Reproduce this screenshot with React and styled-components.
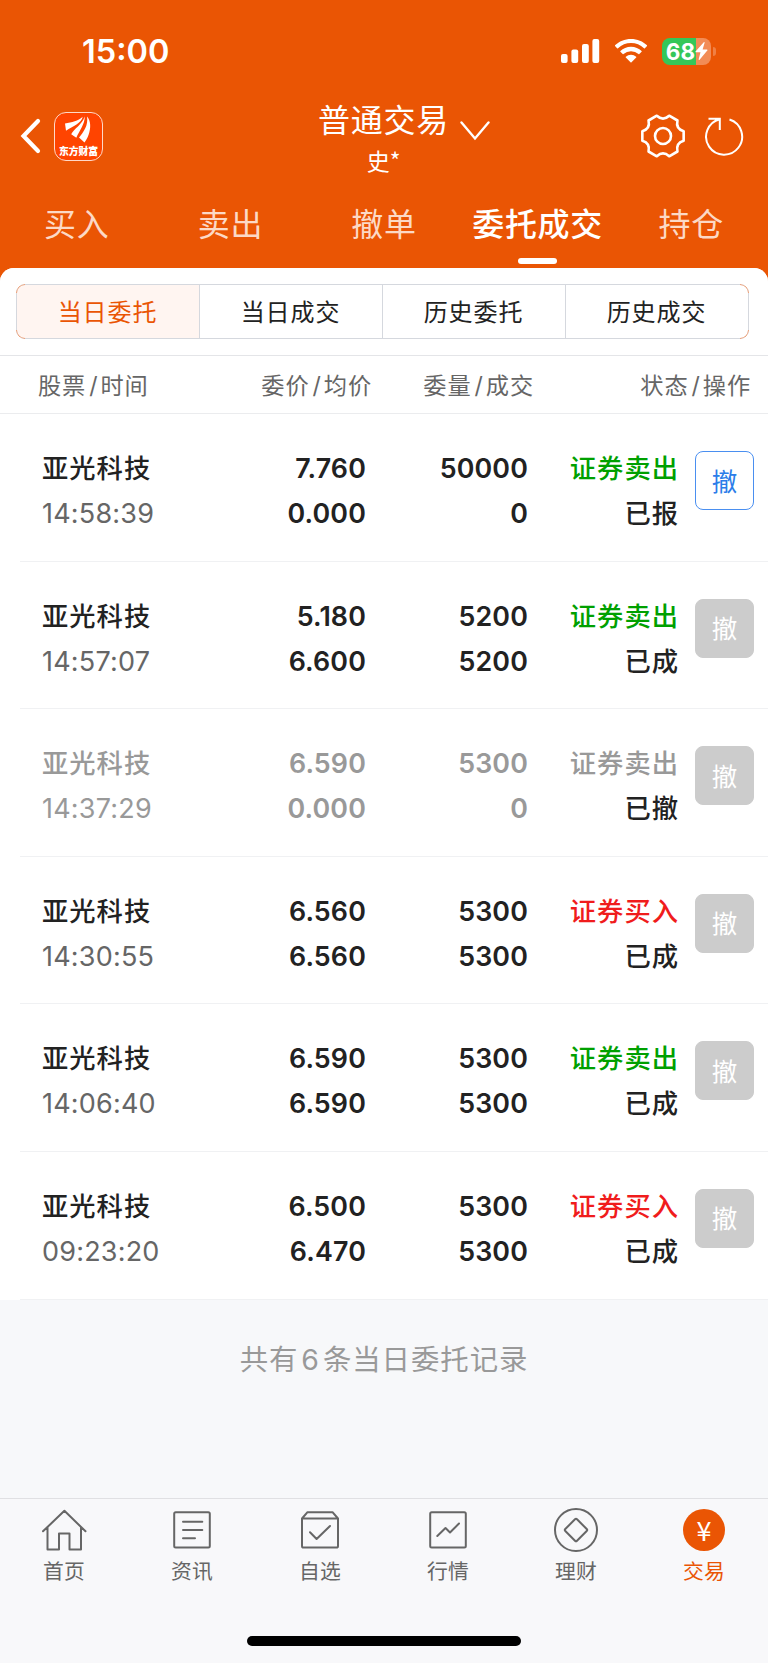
import React from "react";
import styled, { createGlobalStyle } from "styled-components";

const GlobalStyle = createGlobalStyle`
* {
  box-sizing: border-box;
}

body {
  margin: 0;
  background: #f7f8fa;
  font-family: Inter, "Noto Sans CJK SC", sans-serif;
  color: #222;
}
`

const Page = styled.div`
display: flex;
flex-direction: column;
width: 768px;
height: 1663px;
overflow: hidden;
background: #ea5504;
`

const StatusBar = styled.div`
display: flex;
align-items: center;
height: 102px;
padding: 0 52px 0 82px;
color: #fff;
`

const Clock = styled.span`
flex: 1;
padding-top: 2px;
font-size: 32.5px;
font-weight: 600;
line-height: 40px;
`

const StatusIcons = styled.div`
display: flex;
align-items: center;
gap: 15px;
`

const BatteryWrap = styled.div`
display: flex;
align-items: center;
gap: 2px;
`

const Battery = styled.div`
display: flex;
align-items: center;
justify-content: center;
width: 49px;
height: 27px;
padding-left: 1px;
border-radius: 8px;
background: linear-gradient(90deg, #34c759 0 34px, #f28c56 34px);
font-size: 22.5px;
font-weight: 700;
line-height: 27px;
`

const BatteryTip = styled.div`
width: 3px;
height: 9px;
border-radius: 0 4px 4px 0;
background: #f08044;
`

const TitleBar = styled.div`
display: grid;
grid-template-columns: 1fr auto 1fr;
grid-template-rows: 68px;
align-items: center;
height: 68px;
padding: 0 23px 0 20px;
color: #fff;
`

const TitleLeft = styled.div`
display: flex;
align-items: center;
gap: 12px;
`

const Logo = styled.div`
display: flex;
flex-direction: column;
align-items: center;
width: 49px;
height: 49px;
border: 1px solid #ffd9c8;
border-radius: 12px;
background: #ff4400;
`

const LogoText = styled.span`
font-size: 9.8px;
font-weight: 900;
line-height: 13px;
white-space: nowrap;
`

const Account = styled.div`
display: flex;
flex-direction: column;
align-items: center;
padding-top: 5px;
`

const AccountName = styled.div`
display: flex;
align-items: center;
gap: 11px;
padding-left: 43px;
font-size: 32px;
letter-spacing: 0.7px;
line-height: 43px;

svg {
  margin-top: 20px;
}
`

const AccountUser = styled.div`
padding-left: 2px;
font-family: "Noto Sans CJK SC", sans-serif;
font-size: 23px;
line-height: 36px;
`

const TitleRight = styled.div`
display: flex;
align-items: center;
justify-content: flex-end;
gap: 20px;
`

const Tabs = styled.div`
display: grid;
grid-template-columns: repeat(5, 1fr);
height: 98px;
`

const Tab = styled.div`
display: flex;
flex-direction: column;
align-items: center;
padding-top: 32px;
font-size: 32px;
letter-spacing: 0.7px;
line-height: 46px;
font-weight: ${props => props.$active ? 500 : 400};
color: ${props => props.$active ? "#fff" : "#fcd9c6"};
`

const TabLine = styled.div`
width: 39px;
height: 6px;
margin-top: 10px;
border-radius: 3px;
background: #fff;
`

const Sheet = styled.div`
flex: 1;
display: flex;
flex-direction: column;
border-radius: 14px 14px 0 0;
background: #f7f8fa;
overflow: hidden;
`

const SegmentArea = styled.div`
height: 88px;
padding: 16px 19px 0 16px;
background: #fff;
border-bottom: 1px solid #e4e5e8;
`

const Segments = styled.div`
position: relative;
display: grid;
grid-template-columns: 182px 183px 183px 1fr;
height: 55px;
border: 1px solid #d5d8de;
border-radius: 9px;

/* orange outline that shows only on the four rounded corners */
&::after {
  content: "";
  position: absolute;
  inset: -1px;
  border: 1px solid #f09a6c;
  border-radius: 9px;
  mask:
    linear-gradient(#000 0 0) 0 0 / 9px 9px no-repeat,
    linear-gradient(#000 0 0) 100% 0 / 9px 9px no-repeat,
    linear-gradient(#000 0 0) 0 100% / 9px 9px no-repeat,
    linear-gradient(#000 0 0) 100% 100% / 9px 9px no-repeat;
}
`

const Segment = styled.div`
display: flex;
align-items: center;
justify-content: center;
padding: 0 1px 3px 0;
font-size: 24px;
letter-spacing: 0.9px;
color: ${props => props.$active ? "#ea5504" : "#222"};
background: ${props => props.$active ? "#fff5f1" : "#fff"};

&:first-child {
  border-radius: 8px 0 0 8px;
}

&:last-child {
  border-radius: 0 8px 8px 0;
}

& + & {
  border-left: 1px solid #d5d8de;
}
`

const TableHead = styled.div`
display: grid;
grid-template-columns: 171px 163px 162px 217px;
align-items: center;
height: 58px;
padding: 0 0 2px 38px;
border-bottom: 1px solid #ebecee;
background: #fff;
font-size: 23.2px;
letter-spacing: 0.9px;
color: #666;
`

const HeadCell = styled.span`
text-align: ${props => props.$align || "right"};

i {
  font-style: normal;
  padding: 0 2px 0 3px;
}
`

const List = styled.div`
background: #fff;
`

const Row = styled.div`
display: grid;
grid-template-columns: 164px 160px 162px 150px 76px;
height: 147.6px;
margin-left: 20px;
padding: 32px 0 0 22px;
border-bottom: 1px solid #f0f1f3;
`

const Cell = styled.div`
display: flex;
flex-direction: column;
align-items: ${props => props.$align || "flex-end"};
font-size: 26.8px;
font-weight: 600;
letter-spacing: 0.15px;
line-height: 45px;
color: ${props => props.$muted ? "#999" : "#222"};
`

const Chinese = styled.span`
font-size: 26.3px;
letter-spacing: 1px;
font-weight: 500;
margin-right: -1px;
color: ${props => props.$color || "inherit"};
`

const Time = styled.span`
font-size: 27px;
font-weight: 400;
letter-spacing: 0.2px;
color: ${props => props.$muted ? "#999" : "#666"};
`

const CancelButton = styled.button`
justify-self: end;
width: 59px;
height: 59px;
margin-top: 5px;
padding: 0 0 3px;
border: 1px solid ${props => props.$enabled ? "#4a8ff0" : "#ccc"};
border-radius: 8px;
background: ${props => props.$enabled ? "#fff" : "#ccc"};
color: ${props => props.$enabled ? "#2b7de9" : "#fff"};
font-family: inherit;
font-size: 25.5px;
`

const Summary = styled.div`
flex: 1;
padding-top: 39px;
text-align: center;
font-size: 28.4px;
line-height: 42px;
letter-spacing: 0.95px;
color: #999;

i {
  font-style: normal;
  padding: 0 3px;
}
`

const BottomNav = styled.div`
display: grid;
grid-template-columns: repeat(6, 1fr);
height: 128px;
padding-top: 7px;
border-top: 1px solid #e0e0e3;
background: #f8f8fa;
`

const NavItem = styled.div`
display: flex;
flex-direction: column;
align-items: center;
font-size: 20.8px;
letter-spacing: 0.3px;
line-height: 35px;
color: ${props => props.$active ? "#ea5504" : "#666"};
`

const YuanIcon = styled.div`
display: flex;
align-items: center;
justify-content: center;
width: 42px;
height: 42px;
margin: 3px 0;
padding-bottom: 2px;
border-radius: 50%;
background: #ea5504;
color: #fff;
font-family: "Noto Sans CJK SC", sans-serif;
font-size: 27px;
letter-spacing: 0;
`

const HomeBarArea = styled.div`
display: flex;
justify-content: center;
height: 37px;
padding-top: 10px;
background: #f8f8fa;
`

const HomeBar = styled.div`
width: 274px;
height: 10px;
border-radius: 5px;
background: #000;
`

const NavSvg = ({ children }) => (
    <svg width="48" height="48" viewBox="0 0 48 48" fill="none" stroke="#666" strokeWidth="2" strokeLinejoin="round" strokeLinecap="round">
        {children}
    </svg>
)

const tabs = ["买入", "卖出", "撤单", "委托成交", "持仓"]
const segments = ["当日委托", "当日成交", "历史委托", "历史成交"]
const heads = [["股票", "时间"], ["委价", "均价"], ["委量", "成交"], ["状态", "操作"]]

const orders = [
    { time: "14:58:39", price: "7.760", avg: "0.000", amount: "50000", done: "0", side: "证券卖出", state: "已报" },
    { time: "14:57:07", price: "5.180", avg: "6.600", amount: "5200", done: "5200", side: "证券卖出", state: "已成" },
    { time: "14:37:29", price: "6.590", avg: "0.000", amount: "5300", done: "0", side: "证券卖出", state: "已撤" },
    { time: "14:30:55", price: "6.560", avg: "6.560", amount: "5300", done: "5300", side: "证券买入", state: "已成" },
    { time: "14:06:40", price: "6.590", avg: "6.590", amount: "5300", done: "5300", side: "证券卖出", state: "已成" },
    { time: "09:23:20", price: "6.500", avg: "6.470", amount: "5300", done: "5300", side: "证券买入", state: "已成" },
]

const navItems = [
    {
        label: "首页",
        icon: <NavSvg><path d="M3 25.300 24.400 4.800 45.500 25.300M7.500 21.300V43.500H19V27.500H29.500V43.500H41V21.300" /></NavSvg>
    },
    {
        label: "资讯",
        icon: <NavSvg><rect x="6.200" y="6.200" width="35.600" height="35.400" rx="1.500" /><path d="M15 15.700H34.300M15 24H34.300M15 32.200H27" /></NavSvg>
    },
    {
        label: "自选",
        icon: <NavSvg><path d="M6 12.500 11.500 6.200H36.500L42 12.500V40Q42 41.600 40.400 41.600H7.600Q6 41.600 6 40ZM6 12.500H42M14 26.300 20.600 33 34 20" /></NavSvg>
    },
    {
        label: "行情",
        icon: <NavSvg><rect x="6.200" y="6.200" width="35.600" height="35.400" rx="1.500" /><path d="M13.300 30 21.500 22 26 26.500 35 17.500" /></NavSvg>
    },
    {
        label: "理财",
        icon: <NavSvg><circle cx="24" cy="24" r="21" /><path d="M23 13.300Q24 12.300 25 13.300L34.700 23Q35.700 24 34.700 25L25 34.700Q24 35.700 23 34.700L13.300 25Q12.300 24 13.300 23Z" /></NavSvg>
    },
    { label: "交易", active: true, icon: <YuanIcon>¥</YuanIcon> },
]

const sideColor = order => {
    if (order.state === "已撤") return "#999"
    return order.side === "证券买入" ? "#f01c1c" : "#00a000"
}

class App extends React.Component {

    renderStatusBar() {
        return (
            <StatusBar>
                <Clock>15:00</Clock>
                <StatusIcons>
                    <svg width="39" height="24" viewBox="0 0 39 24" fill="#fff">
                        <rect x="0" y="15" width="6.600" height="9" rx="2" />
                        <rect x="10.400" y="10.400" width="6.800" height="13.600" rx="2" />
                        <rect x="21" y="5" width="6.800" height="19" rx="2" />
                        <rect x="31.400" y="0" width="6.800" height="24" rx="2" />
                    </svg>
                    <svg width="32" height="24" viewBox="0 0 32 24" fill="#fff">
                        <path d="M16 0C22.300 0 27.900 2.400 32 6.300Q32.300 6.700 32 7.100L29.900 9.200Q29.400 9.600 29 9.200A19 19 0 0 0 3 9.200Q2.600 9.600 2.100 9.200L0 7.100Q-.3 6.700 0 6.300C4.100 2.400 9.700 0 16 0Z" />
                        <path d="M16 7.800C20.200 7.800 23.900 9.400 26.600 12Q27 12.400 26.600 12.800L24.300 15.100Q23.900 15.500 23.500 15.100A11 11 0 0 0 8.500 15.100Q8.100 15.500 7.700 15.100L5.400 12.800Q5 12.400 5.400 12C8.100 9.400 11.800 7.800 16 7.800Z" />
                        <path d="M16 15.700Q19 15.700 21.200 17.700Q21.600 18.100 21.200 18.500L16.500 23.200Q16 23.700 15.500 23.200L10.800 18.500Q10.400 18.100 10.800 17.700Q13 15.700 16 15.700Z" />
                    </svg>
                    <BatteryWrap>
                        <Battery>
                            68
                            <svg width="13" height="18" viewBox="0 0 13 18" fill="#fff">
                                <path d="M9 0 .5 9.500Q.2 10.300 1 10.300H5.500L3.600 17.500Q4 18.200 4.600 17.700L12.500 8.200Q12.700 7.400 12 7.400H7.600L9.700.6Q9.700 0 9 0Z" />
                            </svg>
                        </Battery>
                        <BatteryTip />
                    </BatteryWrap>
                </StatusIcons>
            </StatusBar>
        )
    }

    renderTitleBar() {
        return (
            <TitleBar>
                <TitleLeft>
                    <svg width="22" height="36" viewBox="0 0 22 36" fill="none" stroke="#fff" strokeWidth="4.200" strokeLinecap="round" strokeLinejoin="miter">
                        <path d="M18 3 3.500 18 18 33" />
                    </svg>
                    <Logo>
                        <svg width="47" height="32" viewBox="1 1 47 32" fill="#fff">
                            <path d="M11 11.500C18 10 24 9.500 28.700 4.800C27.500 11.500 19 14 12 18.800Z" />
                            <path d="M30.700 4.500C31 12 25.500 18.500 22.300 25.800L17.200 22.300C20 16.500 28 13 30.700 4.500Z" />
                            <path d="M33 4.500C37 9 37 16 34.500 23C33.500 26 31.700 28.500 30.500 30.500L25 25.500C29.500 20 34.500 13.500 33 4.500Z" />
                        </svg>
                        <LogoText>东方财富</LogoText>
                    </Logo>
                </TitleLeft>
                <Account>
                    <AccountName>
                        普通交易
                        <svg width="30" height="22" viewBox="0 0 30 22" fill="none" stroke="#fff" strokeWidth="2.400" strokeLinecap="round">
                            <path d="M1.500 2.500 15 18.500 28.500 2.500" />
                        </svg>
                    </AccountName>
                    <AccountUser>史*</AccountUser>
                </Account>
                <TitleRight>
                    <svg width="44" height="44" viewBox="0 0 44 44" fill="none" stroke="#fff" strokeWidth="2.600" strokeLinejoin="round">
                        <path d="M15.800 1.730Q22 7.500 28.200 1.730L36.460 6.500Q34.560 14.750 42.660 17.230V26.770Q34.560 29.250 36.460 37.500L28.200 42.270Q22 36.500 15.800 42.270L7.540 37.500Q9.440 29.250 1.340 26.770V17.230Q9.440 14.750 7.540 6.500Z" />
                        <circle cx="22" cy="22" r="8" />
                    </svg>
                    <svg width="40" height="40" viewBox="0 0 40 40" fill="none" stroke="#fff" strokeWidth="2">
                        <path d="M24.500 3.500A18 18 0 1 1 14.800 3.200M3.500 2.800H14.800V14" />
                    </svg>
                </TitleRight>
            </TitleBar>
        )
    }

    renderOrder(order) {
        const muted = order.state === "已撤"
        return (
            <Row key={order.time}>
                <Cell $align="flex-start" $muted={muted}>
                    <Chinese>亚光科技</Chinese>
                    <Time $muted={muted}>{order.time}</Time>
                </Cell>
                <Cell $muted={muted}>
                    <span>{order.price}</span>
                    <span>{order.avg}</span>
                </Cell>
                <Cell $muted={muted}>
                    <span>{order.amount}</span>
                    <span>{order.done}</span>
                </Cell>
                <Cell>
                    <Chinese $color={sideColor(order)}>{order.side}</Chinese>
                    <Chinese>{order.state}</Chinese>
                </Cell>
                <CancelButton $enabled={order.state === "已报"}>撤</CancelButton>
            </Row>
        )
    }

    render() {
        return (
            <Page>
                <GlobalStyle />
                {this.renderStatusBar()}
                {this.renderTitleBar()}
                <Tabs>
                    {tabs.map(tab => (
                        <Tab key={tab} $active={tab === "委托成交"}>
                            {tab}
                            {tab === "委托成交" && <TabLine />}
                        </Tab>
                    ))}
                </Tabs>
                <Sheet>
                    <SegmentArea>
                        <Segments>
                            {segments.map(name => (
                                <Segment key={name} $active={name === "当日委托"}>{name}</Segment>
                            ))}
                        </Segments>
                    </SegmentArea>
                    <TableHead>
                        {heads.map(([first, second], index) => (
                            <HeadCell key={first} $align={index === 0 ? "left" : "right"}>{first}<i>/</i>{second}</HeadCell>
                        ))}
                    </TableHead>
                    <List>
                        {orders.map(order => this.renderOrder(order))}
                    </List>
                    <Summary>共有<i>6</i>条当日委托记录</Summary>
                    <BottomNav>
                        {navItems.map(item => (
                            <NavItem key={item.label} $active={item.active}>
                                {item.icon}
                                {item.label}
                            </NavItem>
                        ))}
                    </BottomNav>
                    <HomeBarArea>
                        <HomeBar />
                    </HomeBarArea>
                </Sheet>
            </Page>
        )
    }
}

export default App;
